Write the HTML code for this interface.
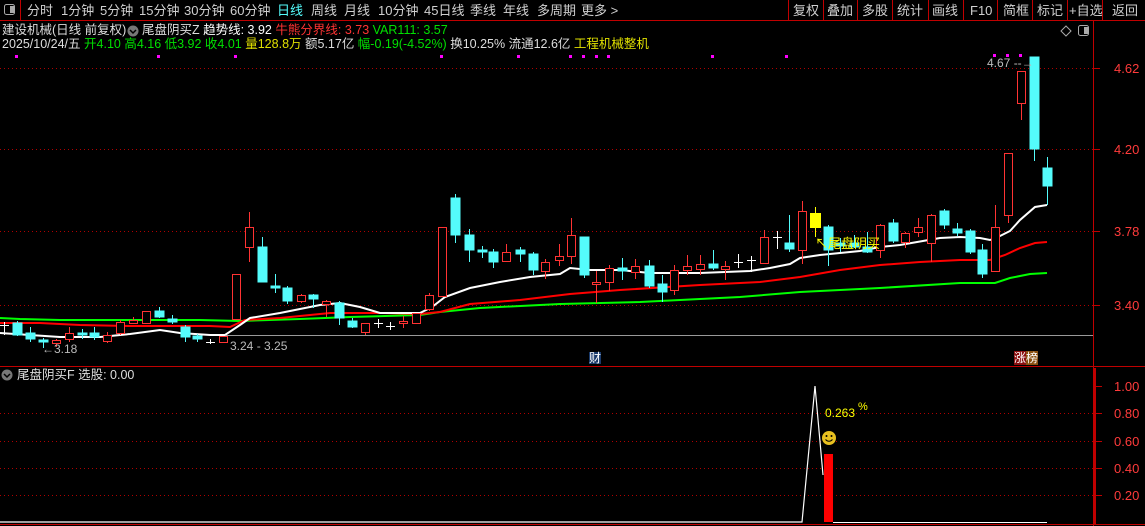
<!DOCTYPE html>
<html><head><meta charset="utf-8"><style>
*{margin:0;padding:0}
body{width:1145px;height:526px;background:#000;overflow:hidden;position:relative;font-family:"Liberation Sans","Noto Sans CJK SC",sans-serif;}
.t{position:absolute;white-space:nowrap;line-height:1}
.bar{font-size:13px;color:#d0d0d0;top:4px}
.ax{font-size:13px;color:#ff3b3b;left:1114px}
</style></head><body>
<svg width="1145" height="526" style="position:absolute;left:0;top:0">
<!-- frame lines -->
<line x1="0" y1="20.5" x2="1145" y2="20.5" stroke="#c00000"/>
<line x1="20.5" y1="0" x2="20.5" y2="20" stroke="#c00000"/>
<g stroke="#c00000">
<line x1="788.5" y1="0" x2="788.5" y2="20"/><line x1="823.5" y1="0" x2="823.5" y2="20"/><line x1="857.5" y1="0" x2="857.5" y2="20"/><line x1="892.5" y1="0" x2="892.5" y2="20"/><line x1="928.5" y1="0" x2="928.5" y2="20"/><line x1="963.5" y1="0" x2="963.5" y2="20"/><line x1="997.5" y1="0" x2="997.5" y2="20"/><line x1="1032.5" y1="0" x2="1032.5" y2="20"/><line x1="1067.5" y1="0" x2="1067.5" y2="20"/><line x1="1102.5" y1="0" x2="1102.5" y2="20"/>
</g>
<line x1="1093.5" y1="20" x2="1093.5" y2="526" stroke="#c00000"/>
<line x1="0" y1="366.5" x2="1145" y2="366.5" stroke="#c00000"/>
<line x1="0" y1="524.5" x2="1145" y2="524.5" stroke="#c00000"/>
<line x1="1095" y1="368" x2="1095" y2="524" stroke="#c00000" stroke-width="2"/>
<!-- icons top-left -->
<rect x="4.5" y="4.5" width="10" height="10" rx="2" fill="none" stroke="#aaa"/>
<rect x="10" y="6" width="4" height="7" fill="#aaa"/>
<!-- right top icons -->
<path d="M1066 26 L1071 31 L1066 36 L1061 31 Z" fill="none" stroke="#aaa"/>
<rect x="1078.5" y="25.5" width="10" height="10" rx="2" fill="none" stroke="#aaa"/>
<rect x="1084" y="27" width="4" height="7" fill="#aaa"/>
<!-- dotted grid -->
<g stroke="#b00000" stroke-dasharray="1,3">
<line x1="0" y1="68.5" x2="1093" y2="68.5"/><line x1="0" y1="149.5" x2="1093" y2="149.5"/><line x1="0" y1="231.5" x2="1093" y2="231.5"/><line x1="0" y1="305.5" x2="1093" y2="305.5"/>
<line x1="0" y1="413.5" x2="1093" y2="413.5"/><line x1="0" y1="441.5" x2="1093" y2="441.5"/><line x1="0" y1="468.5" x2="1093" y2="468.5"/><line x1="0" y1="495.5" x2="1093" y2="495.5"/>
</g>
<g stroke="#c00000">
<line x1="1094" y1="68.5" x2="1100" y2="68.5"/><line x1="1094" y1="149.5" x2="1100" y2="149.5"/><line x1="1094" y1="231.5" x2="1100" y2="231.5"/><line x1="1094" y1="305.5" x2="1100" y2="305.5"/>
<line x1="1096" y1="386.5" x2="1102" y2="386.5"/><line x1="1096" y1="413.5" x2="1102" y2="413.5"/><line x1="1096" y1="441.5" x2="1102" y2="441.5"/><line x1="1096" y1="468.5" x2="1102" y2="468.5"/><line x1="1096" y1="495.5" x2="1102" y2="495.5"/>
</g>
<!-- gray line -->
<line x1="226" y1="335.5" x2="1093" y2="335.5" stroke="#999"/>
<!-- magenta dots -->
<g fill="#ff00ff">
<rect x="15" y="55" width="3" height="3"/><rect x="157" y="55" width="3" height="3"/><rect x="234" y="55" width="3" height="3"/><rect x="440" y="55" width="3" height="3"/><rect x="517" y="55" width="3" height="3"/><rect x="569" y="55" width="3" height="3"/><rect x="582" y="55" width="3" height="3"/><rect x="595" y="55" width="3" height="3"/><rect x="607" y="55" width="3" height="3"/><rect x="711" y="55" width="3" height="3"/><rect x="785" y="55" width="3" height="3"/><rect x="993" y="54" width="3" height="3"/><rect x="1006" y="54" width="3" height="3"/><rect x="1019" y="54" width="3" height="3"/>
</g>
<!-- MA lines -->
<polyline fill="none" stroke="#00ff00" stroke-width="2" points="0,318 20,319 60,320 200,320 240,321 300,319 350,317 420,315 440,312 480,308 560,304 640,302 740,297 800,292 880,288 960,283 995,283 1010,278 1030,274 1047,273"/>
<polyline fill="none" stroke="#ff0000" stroke-width="2" points="0,323 40,323 80,325 130,326 210,326 230,327 245,320 280,318 330,313 380,313 420,314 440,312 470,304 520,300 570,294 620,290 700,285 760,282 800,277 840,270 880,265 920,262 960,260 990,260 1005,255 1020,248 1035,243 1047,242"/>
<polyline fill="none" stroke="#ffffff" stroke-width="2" points="0,333 30,335 60,337 100,337 130,334 160,330 180,333 210,335 225,335 240,325 250,318 280,313 320,305 340,303 360,307 380,313 420,313 432,307 445,297 470,288 500,282 530,277 560,274 570,268 590,270 620,270 650,273 700,273 750,271 770,268 790,264 800,258 820,255 860,251 880,247 900,245 940,238 960,237 980,238 990,240 1000,236 1010,231 1020,220 1035,207 1047,205"/>
<!-- candles -->
<g stroke-width="1" shape-rendering="crispEdges">
<!-- whites -->
<g stroke="#fff">
<line x1="4.5" y1="322" x2="4.5" y2="335"/><line x1="0" y1="325.5" x2="9" y2="325.5"/>
<line x1="210.5" y1="339" x2="210.5" y2="344"/><line x1="206" y1="342.5" x2="215" y2="342.5"/>
<line x1="378.5" y1="319" x2="378.5" y2="328"/><line x1="374" y1="323.5" x2="383" y2="323.5"/>
<line x1="390.5" y1="322" x2="390.5" y2="330"/><line x1="386" y1="326.5" x2="395" y2="326.5"/>
<line x1="738.5" y1="254" x2="738.5" y2="268"/><line x1="734" y1="262.5" x2="743" y2="262.5"/>
<line x1="751.5" y1="256" x2="751.5" y2="272"/><line x1="747" y1="260.5" x2="756" y2="260.5"/>
<line x1="777.5" y1="231" x2="777.5" y2="249"/><line x1="773" y1="237.5" x2="782" y2="237.5"/>
</g>
<!-- cyan -->
<g stroke="#54fcfc" fill="#54fcfc">
<line x1="17.5" y1="321" x2="17.5" y2="336"/><rect x="13" y="323" width="9" height="12"/>
<line x1="30.5" y1="327" x2="30.5" y2="342"/><rect x="26" y="333" width="9" height="6"/>
<line x1="43.5" y1="338" x2="43.5" y2="348"/><rect x="39" y="340" width="9" height="2"/>
<line x1="82.5" y1="329" x2="82.5" y2="339"/><rect x="78" y="333" width="9" height="2"/>
<line x1="94.5" y1="327" x2="94.5" y2="340"/><rect x="90" y="333" width="9" height="4"/>
<line x1="159.5" y1="307" x2="159.5" y2="318"/><rect x="155" y="311" width="9" height="6"/>
<line x1="172.5" y1="315" x2="172.5" y2="324"/><rect x="168" y="319" width="9" height="3"/>
<line x1="185.5" y1="325" x2="185.5" y2="342"/><rect x="181" y="327" width="9" height="10"/>
<line x1="197.5" y1="334" x2="197.5" y2="342"/><rect x="193" y="336" width="9" height="3"/>
<line x1="262.5" y1="237" x2="262.5" y2="282"/><rect x="258" y="247" width="9" height="35"/>
<line x1="275.5" y1="274" x2="275.5" y2="293"/><rect x="271" y="286" width="9" height="2"/>
<line x1="287.5" y1="286" x2="287.5" y2="304"/><rect x="283" y="288" width="9" height="13"/>
<line x1="313.5" y1="294" x2="313.5" y2="308"/><rect x="309" y="295" width="9" height="4"/>
<line x1="339.5" y1="301" x2="339.5" y2="325"/><rect x="335" y="303" width="9" height="15"/>
<line x1="352.5" y1="318" x2="352.5" y2="328"/><rect x="348" y="321" width="9" height="6"/>
<line x1="455.5" y1="194" x2="455.5" y2="243"/><rect x="451" y="198" width="9" height="37"/>
<line x1="469.5" y1="229" x2="469.5" y2="262"/><rect x="465" y="235" width="9" height="15"/>
<line x1="482.5" y1="246" x2="482.5" y2="258"/><rect x="478" y="250" width="9" height="2"/>
<line x1="493.5" y1="249" x2="493.5" y2="268"/><rect x="489" y="252" width="9" height="10"/>
<line x1="520.5" y1="247" x2="520.5" y2="262"/><rect x="516" y="250" width="9" height="4"/>
<line x1="533.5" y1="252" x2="533.5" y2="275"/><rect x="529" y="254" width="9" height="16"/>
<line x1="584.5" y1="237" x2="584.5" y2="278"/><rect x="580" y="237" width="9" height="38"/>
<line x1="622.5" y1="258" x2="622.5" y2="280"/><rect x="618" y="268" width="9" height="3"/>
<line x1="649.5" y1="260" x2="649.5" y2="288"/><rect x="645" y="266" width="9" height="20"/>
<line x1="662.5" y1="275" x2="662.5" y2="302"/><rect x="658" y="284" width="9" height="8"/>
<line x1="713.5" y1="250" x2="713.5" y2="270"/><rect x="709" y="264" width="9" height="4"/>
<line x1="789.5" y1="215" x2="789.5" y2="252"/><rect x="785" y="243" width="9" height="6"/>
<line x1="828.5" y1="225" x2="828.5" y2="266"/><rect x="824" y="227" width="9" height="23"/>
<line x1="840.5" y1="238" x2="840.5" y2="252"/><rect x="836" y="243" width="9" height="3"/>
<line x1="854.5" y1="235" x2="854.5" y2="248"/><rect x="850" y="243" width="9" height="4"/>
<line x1="867.5" y1="232" x2="867.5" y2="253"/><rect x="863" y="247" width="9" height="5"/>
<line x1="893.5" y1="219" x2="893.5" y2="243"/><rect x="889" y="223" width="9" height="18"/>
<line x1="944.5" y1="209" x2="944.5" y2="229"/><rect x="940" y="211" width="9" height="14"/>
<line x1="957.5" y1="223" x2="957.5" y2="236"/><rect x="953" y="229" width="9" height="4"/>
<line x1="970.5" y1="229" x2="970.5" y2="254"/><rect x="966" y="231" width="9" height="21"/>
<line x1="982.5" y1="244" x2="982.5" y2="278"/><rect x="978" y="250" width="9" height="24"/>
<line x1="1034.5" y1="57" x2="1034.5" y2="161"/><rect x="1030" y="57" width="9" height="92"/>
<line x1="1047.5" y1="157" x2="1047.5" y2="205"/><rect x="1043" y="168" width="9" height="18"/>
</g>
<!-- yellow -->
<line x1="815.5" y1="207" x2="815.5" y2="237" stroke="#ffff00"/>
<rect x="810" y="213" width="11" height="15" fill="#ffff00"/>
<!-- red hollow -->
<g stroke="#ff3333" fill="#000">
<line x1="56.5" y1="339" x2="56.5" y2="347"/><rect x="52.5" y="340.5" width="8" height="3"/>
<line x1="69.5" y1="327" x2="69.5" y2="342"/><rect x="65.5" y="333.5" width="8" height="6"/>
<line x1="107.5" y1="332" x2="107.5" y2="343"/><rect x="103.5" y="335.5" width="8" height="6"/>
<line x1="120.5" y1="320" x2="120.5" y2="335"/><rect x="116.5" y="322.5" width="8" height="11"/>
<line x1="133.5" y1="317" x2="133.5" y2="324"/><rect x="129.5" y="320.5" width="8" height="3"/>
<rect x="142.5" y="311.5" width="8" height="12"/>
<rect x="219.5" y="336.5" width="8" height="6"/>
<rect x="232.5" y="274.5" width="8" height="45"/>
<line x1="249.5" y1="212" x2="249.5" y2="262"/><rect x="245.5" y="227.5" width="8" height="20"/>
<line x1="301.5" y1="294" x2="301.5" y2="303"/><rect x="297.5" y="295.5" width="8" height="6"/>
<line x1="326.5" y1="300" x2="326.5" y2="317"/><rect x="322.5" y="301.5" width="8" height="3"/>
<line x1="365.5" y1="323" x2="365.5" y2="335"/><rect x="361.5" y="323.5" width="8" height="9"/>
<line x1="403.5" y1="316" x2="403.5" y2="328"/><rect x="399.5" y="321.5" width="8" height="2"/>
<rect x="412.5" y="313.5" width="8" height="10"/>
<line x1="429.5" y1="293" x2="429.5" y2="311"/><rect x="425.5" y="295.5" width="8" height="14"/>
<rect x="438.5" y="227.5" width="8" height="69"/>
<line x1="506.5" y1="244" x2="506.5" y2="262"/><rect x="502.5" y="252.5" width="8" height="9"/>
<line x1="545.5" y1="259" x2="545.5" y2="279"/><rect x="541.5" y="262.5" width="8" height="9"/>
<line x1="559.5" y1="244" x2="559.5" y2="266"/><rect x="555.5" y="256.5" width="8" height="4"/>
<line x1="571.5" y1="218" x2="571.5" y2="264"/><rect x="567.5" y="235.5" width="8" height="21"/>
<line x1="596.5" y1="271" x2="596.5" y2="303"/><rect x="592.5" y="282.5" width="8" height="2"/>
<line x1="609.5" y1="265" x2="609.5" y2="291"/><rect x="605.5" y="268.5" width="8" height="14"/>
<line x1="635.5" y1="259" x2="635.5" y2="279"/><rect x="631.5" y="266.5" width="8" height="6"/>
<line x1="674.5" y1="265" x2="674.5" y2="295"/><rect x="670.5" y="270.5" width="8" height="20"/>
<line x1="687.5" y1="255" x2="687.5" y2="275"/><rect x="683.5" y="266.5" width="8" height="4"/>
<line x1="700.5" y1="255" x2="700.5" y2="275"/><rect x="696.5" y="264.5" width="8" height="5"/>
<line x1="725.5" y1="261" x2="725.5" y2="280"/><rect x="721.5" y="266.5" width="8" height="3"/>
<line x1="764.5" y1="230" x2="764.5" y2="264"/><rect x="760.5" y="237.5" width="8" height="26"/>
<line x1="802.5" y1="201" x2="802.5" y2="264"/><rect x="798.5" y="211.5" width="8" height="39"/>
<line x1="880.5" y1="224" x2="880.5" y2="258"/><rect x="876.5" y="225.5" width="8" height="25"/>
<line x1="905.5" y1="232" x2="905.5" y2="248"/><rect x="901.5" y="233.5" width="8" height="9"/>
<line x1="918.5" y1="218" x2="918.5" y2="237"/><rect x="914.5" y="227.5" width="8" height="5"/>
<line x1="931.5" y1="214" x2="931.5" y2="262"/><rect x="927.5" y="215.5" width="8" height="28"/>
<line x1="995.5" y1="205" x2="995.5" y2="271"/><rect x="991.5" y="227.5" width="8" height="44"/>
<line x1="1008.5" y1="215" x2="1008.5" y2="223"/><rect x="1004.5" y="153.5" width="8" height="62"/>
<line x1="1021.5" y1="103" x2="1021.5" y2="120"/><rect x="1017.5" y="71.5" width="8" height="32"/>
</g>
</g>
<!-- sub panel -->
<circle cx="7" cy="375" r="5.5" fill="#777"/>
<path d="M4 374 L7 377 L10 374" fill="none" stroke="#000" stroke-width="1.5"/>
<circle cx="133" cy="31" r="5.5" fill="#777"/>
<path d="M130 30 L133 33 L136 30" fill="none" stroke="#000" stroke-width="1.5"/>
<polyline fill="none" stroke="#fff" stroke-width="1.2" points="0,522 802,522 815,386 823,475"/>
<line x1="833" y1="522.5" x2="1047" y2="522.5" stroke="#fff"/>
<rect x="824" y="454" width="9" height="68" fill="#ff0000"/>
<circle cx="829" cy="438" r="7" fill="#e8c020"/>
<circle cx="826.5" cy="436" r="1" fill="#000"/><circle cx="831.5" cy="436" r="1" fill="#000"/>
<path d="M825.5 439.5 Q829 443 832.5 439.5" fill="none" stroke="#000"/>
</svg>
<!-- top bar -->
<div class="t bar" style="left:27px">分时</div>
<div class="t bar" style="left:61px">1分钟</div>
<div class="t bar" style="left:100px">5分钟</div>
<div class="t bar" style="left:139px">15分钟</div>
<div class="t bar" style="left:184px">30分钟</div>
<div class="t bar" style="left:230px">60分钟</div>
<div class="t bar" style="left:277px;color:#54fcfc">日线</div>
<div class="t bar" style="left:311px">周线</div>
<div class="t bar" style="left:344px">月线</div>
<div class="t bar" style="left:378px">10分钟</div>
<div class="t bar" style="left:424px">45日线</div>
<div class="t bar" style="left:470px">季线</div>
<div class="t bar" style="left:503px">年线</div>
<div class="t bar" style="left:537px">多周期</div>
<div class="t bar" style="left:581px">更多 &gt;</div>
<div class="t bar" style="left:793px">复权</div>
<div class="t bar" style="left:827px">叠加</div>
<div class="t bar" style="left:862px">多股</div>
<div class="t bar" style="left:897px">统计</div>
<div class="t bar" style="left:932px">画线</div>
<div class="t bar" style="left:970px">F10</div>
<div class="t bar" style="left:1003px">简框</div>
<div class="t bar" style="left:1037px">标记</div>
<div class="t bar" style="left:1069px">+自选</div>
<div class="t bar" style="left:1112px">返回</div>
<!-- header lines -->
<div class="t" style="left:2px;top:24px;font-size:12.5px;color:#ddd">建设机械(日线 前复权)</div>
<div class="t" style="left:142px;top:24px;font-size:12.5px;color:#ddd">尾盘阴买Z <span style="color:#fff">趋势线: 3.92</span> <span style="color:#ff3333">牛熊分界线: 3.73</span> <span style="color:#00e000">VAR111: 3.57</span></div>
<div class="t" style="left:2px;top:38px;font-size:12.5px;color:#ddd">2025/10/24/五 <span style="color:#00e000">开4.10 高4.16 低3.92 收4.01</span> <span style="color:#e0e000">量128.8万</span> 额5.17亿 <span style="color:#00e000">幅-0.19(-4.52%)</span> 换10.25% 流通12.6亿 <span style="color:#e0e000">工程机械整机</span></div>
<!-- axis labels -->
<div class="t ax" style="top:62px">4.62</div>
<div class="t ax" style="top:143px">4.20</div>
<div class="t ax" style="top:225px">3.78</div>
<div class="t ax" style="top:299px">3.40</div>
<div class="t ax" style="top:380px">1.00</div>
<div class="t ax" style="top:407px">0.80</div>
<div class="t ax" style="top:435px">0.60</div>
<div class="t ax" style="top:462px">0.40</div>
<div class="t ax" style="top:489px">0.20</div>
<!-- annotations -->
<div class="t" style="left:987px;top:57px;font-size:12px;color:#bbb">4.67 --→</div>
<div class="t" style="left:42px;top:343px;font-size:12px;color:#bbb">←3.18</div>
<div class="t" style="left:230px;top:340px;font-size:12px;color:#bbb">3.24 - 3.25</div>
<div class="t" style="left:815px;top:237px;font-size:13px;color:#ffff00">↖尾盘阴买</div>
<div class="t" style="left:589px;top:352px;font-size:12px;color:#fff;background:#1a3a6a">财</div>
<div class="t" style="left:1014px;top:352px;font-size:12px;color:#fff"><span style="background:#8a1010">涨</span><span style="background:#8a5010">榜</span></div>
<div class="t" style="left:17px;top:369px;font-size:12.5px;color:#ddd">尾盘阴买F 选股: 0.00</div>
<div class="t" style="left:825px;top:407px;font-size:12px;color:#ffff00">0.263</div>
<div class="t" style="left:858px;top:402px;font-size:11px;color:#ffff00">%</div>
</body></html>
